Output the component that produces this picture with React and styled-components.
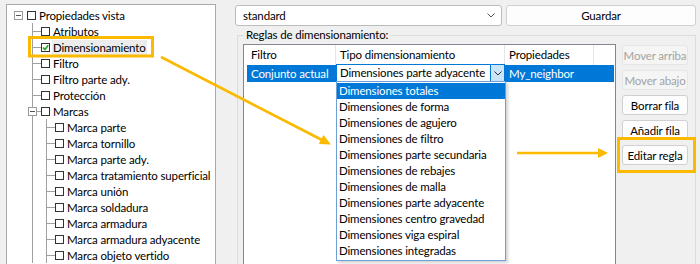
import React from 'react';
import styled, { createGlobalStyle } from 'styled-components';

const GlobalStyle = createGlobalStyle`
  html, body { margin:0; padding:0; background:#f0f0f0; }
  body {
    font-family: Lato, "Noto Sans", sans-serif;
    font-size: 11.5px;
    letter-spacing: -0.15px;
    color: #000;
  }
  * { box-sizing: border-box; }
`;

const Page = styled.div`
  position: relative;
  display: flex;
  width: 700px;
  height: 264px;
  overflow: hidden;
  background: #f0f0f0;
`;

// ---------- left tree ----------
const TreePanel = styled.div`
  margin: 4px 0 0 6px;
  width: 210px;
  height: 300px;
  padding-top: 2px;
  background: #fff;
  border: 1px solid #a9a9a9;
`;

const TreeRow = styled.div`
  display: flex;
  align-items: center;
  height: 16px;
  padding-left: 6px;
  white-space: nowrap;
`;

const Guide = styled.span`
  position: relative;
  flex: none;
  width: 14px;
  height: 16px;
  &::before {
    content: '';
    position: absolute;
    left: 5px;
    top: 0;
    bottom: 0;
    border-left: 1px solid #a0a0a0;
    display: ${p => (p.$line ? 'block' : 'none')};
  }
  &::after {
    content: '';
    position: absolute;
    left: 5px;
    width: 9px;
    top: 8px;
    border-top: 1px solid #a0a0a0;
    display: ${p => (p.$tick ? 'block' : 'none')};
  }
`;

const Expander = styled.span`
  position: absolute;
  left: 1px;
  top: 4px;
  width: 9px;
  height: 9px;
  border: 1px solid #9a9a9a;
  background: #fff;
  z-index: 1;
  &::after {
    content: '';
    position: absolute;
    left: 1px;
    right: 1px;
    top: 3px;
    border-top: 1px solid #555;
  }
`;

const Check = styled.span`
  position: relative;
  flex: none;
  width: 9px;
  height: 9px;
  margin-right: 2px;
  border: 1px solid #333;
  background: #fff;
  svg { position: absolute; left: 0; top: 0; }
`;

const Label = styled.span`
  padding: 0 1px;
  line-height: 15px;
  background: ${p => (p.$selected ? '#ececec' : 'transparent')};
`;

const treeItems = [
  { text: 'Propiedades vista', level: 0, expander: true },
  { text: 'Atributos', level: 1 },
  { text: 'Dimensionamiento', level: 1, checked: true, selected: true },
  { text: 'Filtro', level: 1 },
  { text: 'Filtro parte ady.', level: 1 },
  { text: 'Protección', level: 1 },
  { text: 'Marcas', level: 1, expander: true },
  { text: 'Marca parte', level: 2 },
  { text: 'Marca tornillo', level: 2 },
  { text: 'Marca parte ady.', level: 2 },
  { text: 'Marca tratamiento superficial', level: 2 },
  { text: 'Marca unión', level: 2 },
  { text: 'Marca soldadura', level: 2 },
  { text: 'Marca armadura', level: 2 },
  { text: 'Marca armadura adyacente', level: 2 },
  { text: 'Marca objeto vertido', level: 2 },
];

const TreeItem = ({ item }) => (
  <TreeRow>
    {item.level >= 1 && <Guide />}
    {item.level >= 2 && <Guide $line />}
    <Guide $line={item.level > 0} $tick={item.level > 0}>
      {item.expander && <Expander />}
    </Guide>
    <Check>
      {item.checked && (
        <svg width="7" height="7" viewBox="0 0 7 7">
          <path d="M1 3.5 L3 5.5 L6.2 1.2" fill="none" stroke="#1fa81f" strokeWidth="1.6" />
        </svg>
      )}
    </Check>
    <Label $selected={item.selected}>{item.text}</Label>
  </TreeRow>
);

// ---------- right pane ----------
const RightPane = styled.div`
  flex: 1;
  display: flex;
  flex-direction: column;
  padding: 5px 4px 0 19px;
  min-width: 0;
`;

const TopRow = styled.div`
  display: flex;
  gap: 4px;
  height: 21px;
`;

const Combo = styled.div`
  display: flex;
  align-items: center;
  justify-content: space-between;
  width: 267px;
  padding: 0 6px 0 7px;
  background: #fff;
  border: 1px solid #bcbcbc;
  border-radius: 3px;
`;

const PushButton = styled.div`
  display: flex;
  align-items: center;
  justify-content: center;
  height: ${p => p.$h || 20}px;
  white-space: nowrap;
  border-radius: 3px;
  background: ${p => (p.$disabled ? '#f5f5f5' : '#fdfdfd')};
  border: 1px solid ${p => (p.$disabled ? '#e6e6e6' : '#d0d0d0')};
  color: ${p => (p.$disabled ? '#a3a3a3' : '#000')};
`;

const SaveButton = styled(PushButton)`
  flex: 1;
`;

const GroupBox = styled.fieldset`
  flex: 1;
  margin: 1px 0 0 2px;
  padding: 1px 7px 0 5px;
  border: 1px solid #dcdcdc;
  min-width: 0;
`;

const Legend = styled.legend`
  padding: 0 2px;
  margin-left: 1px;
  line-height: 16px;
`;

const GroupInner = styled.div`
  display: flex;
  gap: 6px;
`;

const Table = styled.div`
  position: relative;
  width: 373px;
  height: 240px;
  background: #fff;
  border: 1px solid #828790;
`;

const HeaderRow = styled.div`
  display: flex;
  height: 20px;
  padding-left: 3px;
`;

const HeaderCell = styled.div`
  width: ${p => p.$w}px;
  flex: ${p => (p.$w ? 'none' : '1')};
  padding-left: 4px;
  line-height: 19px;
  border-right: ${p => (p.$w ? '1px solid #e5e5e5' : 'none')};
`;

const BodyRow = styled.div`
  display: flex;
  height: 17px;
  padding-left: 3px;
  padding-right: 1px;
`;

const SelCell = styled.div`
  width: ${p => p.$w}px;
  flex: ${p => (p.$w ? 'none' : '1')};
  padding-left: 4px;
  line-height: 17px;
  white-space: nowrap;
  background: #0078d7;
  color: #fff;
`;

const EditorCell = styled.div`
  position: relative;
  display: flex;
  width: 169px;
  height: 18px;
  margin-top: -1px;
  background: #fff;
  border: 1px solid #0078d7;
`;

const EditorText = styled.span`
  flex: 1;
  padding-left: 3px;
  line-height: 16px;
  white-space: nowrap;
  overflow: hidden;
`;

const EditorButton = styled.span`
  display: flex;
  align-items: center;
  justify-content: center;
  width: 14px;
  background: #cce4f7;
  border-left: 1px solid #0078d7;
`;

const DropList = styled.div`
  position: absolute;
  top: 100%;
  left: -1px;
  width: 170px;
  padding: 1px 0;
  background: #fff;
  border: 1px solid #6d9fd8;
  box-shadow: 2px 2px 3px rgba(0, 0, 0, 0.18);
  z-index: 2;
`;

const DropItem = styled.div`
  height: 16px;
  line-height: 16px;
  padding-left: 2px;
  white-space: nowrap;
  background: ${p => (p.$active ? '#0078d7' : 'transparent')};
  color: ${p => (p.$active ? '#fff' : '#000')};
`;

const ButtonColumn = styled.div`
  display: flex;
  flex-direction: column;
  gap: 5px;
  width: 66px;
  margin-top: 1px;
`;

const Annotations = styled.svg`
  position: absolute;
  left: 0;
  top: 0;
  pointer-events: none;
  z-index: 5;
`;

const Chevron = ({ color = '#555' }) => (
  <svg width="8" height="5" viewBox="0 0 8 5">
    <path d="M0.5 0.5 L4 4 L7.5 0.5" fill="none" stroke={color} strokeWidth="1" />
  </svg>
);

const dimTypes = [
  'Dimensiones totales',
  'Dimensiones de forma',
  'Dimensiones de agujero',
  'Dimensiones de filtro',
  'Dimensiones parte secundaria',
  'Dimensiones de rebajes',
  'Dimensiones de malla',
  'Dimensiones parte adyacente',
  'Dimensiones centro gravedad',
  'Dimensiones viga espiral',
  'Dimensiones integradas',
];

const ORANGE = '#fbb900';

export default function App() {
  return (
    <Page>
      <GlobalStyle />
      <TreePanel>
        {treeItems.map(item => (
          <TreeItem key={item.text} item={item} />
        ))}
      </TreePanel>

      <RightPane>
        <TopRow>
          <Combo>
            <span>standard</span>
            <Chevron />
          </Combo>
          <SaveButton $h={21}>Guardar</SaveButton>
        </TopRow>

        <GroupBox>
          <Legend>Reglas de dimensionamiento:</Legend>
          <GroupInner>
            <Table>
              <HeaderRow>
                <HeaderCell $w={89}>Filtro</HeaderCell>
                <HeaderCell $w={169}>Tipo dimensionamiento</HeaderCell>
                <HeaderCell $w={89}>Propiedades</HeaderCell>
                <HeaderCell />
              </HeaderRow>
              <BodyRow>
                <SelCell $w={89}>Conjunto actual</SelCell>
                <EditorCell>
                  <EditorText>Dimensiones parte adyacente</EditorText>
                  <EditorButton>
                    <Chevron color="#333" />
                  </EditorButton>
                  <DropList>
                    {dimTypes.map((t, i) => (
                      <DropItem key={t} $active={i === 0}>{t}</DropItem>
                    ))}
                  </DropList>
                </EditorCell>
                <SelCell>My_neighbor</SelCell>
              </BodyRow>
            </Table>

            <ButtonColumn>
              <PushButton $disabled>Mover arriba</PushButton>
              <PushButton $disabled>Mover abajo</PushButton>
              <PushButton>Borrar fila</PushButton>
              <PushButton>Añadir fila</PushButton>
              <PushButton>Editar regla</PushButton>
            </ButtonColumn>
          </GroupInner>
        </GroupBox>
      </RightPane>

      <Annotations width="700" height="264" viewBox="0 0 700 264">
        <rect x="29.5" y="37.5" width="123" height="18.5" fill="none" stroke={ORANGE} strokeWidth="3" />
        <rect x="618.5" y="138.5" width="76" height="33" fill="none" stroke={ORANGE} strokeWidth="3" />
        <line x1="161" y1="57" x2="322" y2="140" stroke={ORANGE} strokeWidth="2.6" />
        <polygon points="331,144.5 318.8,143.9 323.4,134.9" fill={ORANGE} />
        <line x1="517" y1="153" x2="600" y2="153" stroke={ORANGE} strokeWidth="2.6" />
        <polygon points="608,153 598,148 598,158" fill={ORANGE} />
      </Annotations>
    </Page>
  );
}
